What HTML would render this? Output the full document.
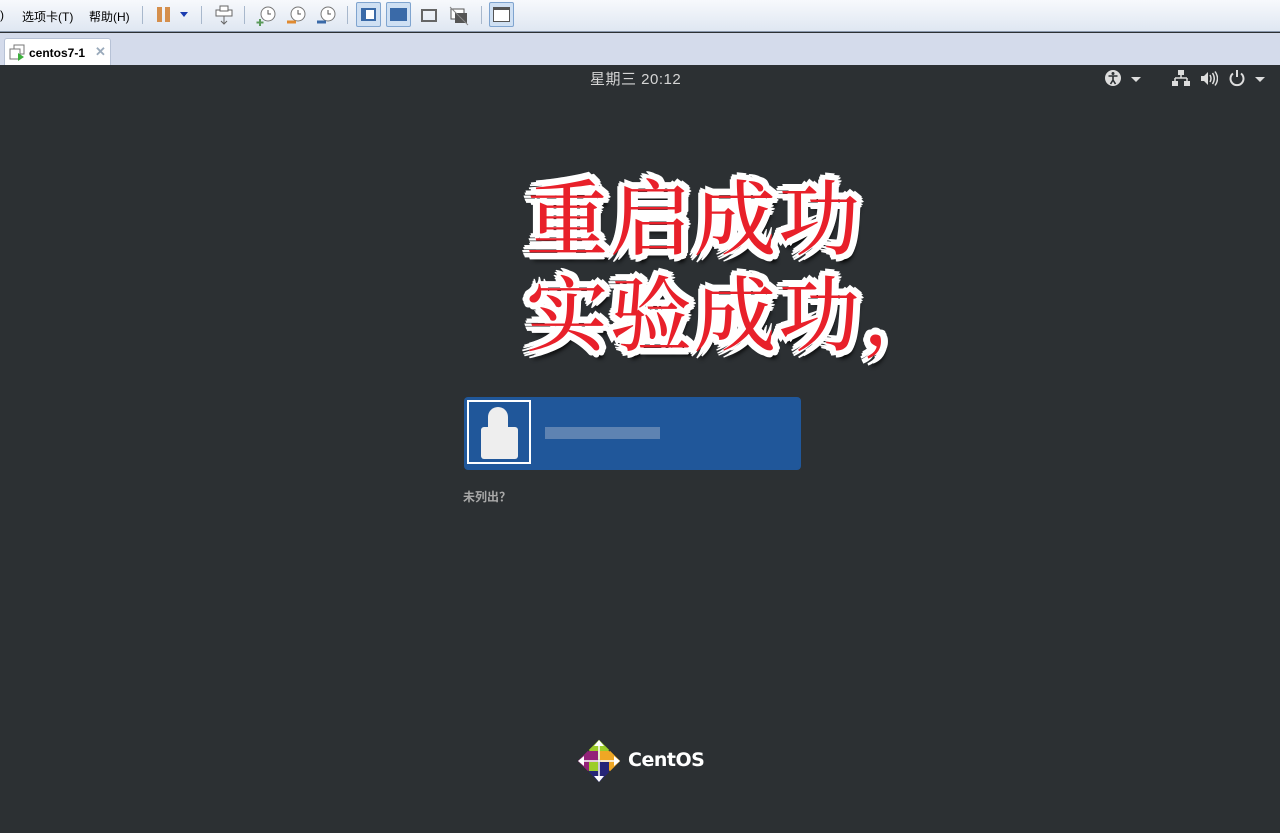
<!DOCTYPE html>
<html><head><meta charset="utf-8"><style>
*{margin:0;padding:0;box-sizing:border-box}
body{width:1280px;height:833px;overflow:hidden;background:#2c3033;font-family:"Liberation Sans","Noto Sans CJK SC",sans-serif;position:relative}
#tb{position:absolute;left:0;top:0;width:1280px;height:32px;background:linear-gradient(#f7f9fc,#dfe7f2);border-bottom:1px solid #8a98ad;font-size:12px;color:#000}
#tb span{position:absolute;top:8px}
.sep{position:absolute;top:6px;width:1px;height:18px;background:#a8b8cc}
.ic{position:absolute;top:5px;width:22px;height:22px}
#tabs{position:absolute;left:0;top:33px;width:1280px;height:32px;background:#d4dbeb}
#tab{position:absolute;left:4px;top:5px;width:107px;height:27px;background:#fff;border:1px solid #b7c2d6;border-bottom:none;border-radius:3px 3px 0 0;font-size:12px;font-weight:bold}
#scr{position:absolute;left:0;top:65px;width:1280px;height:768px;background:#2c3033}
.big{position:absolute;left:526px;font-family:"Noto Serif CJK SC","Noto Sans CJK SC",serif;font-weight:500;font-size:82px;color:#e8202a;line-height:1;letter-spacing:2px;
text-shadow:-5px -5px 0 #fff,5px -5px 0 #fff,-5px 5px 0 #fff,5px 5px 0 #fff,0 -7px 0 #fff,0 7px 0 #fff,-7px 0 0 #fff,7px 0 0 #fff,-6px 3px 0 #fff,6px 3px 0 #fff,-6px -3px 0 #fff,6px -3px 0 #fff,4px 8px 4px #000}
</style></head><body>
<div id="tb">
<span style="left:0">)</span><span style="left:22px">选项卡(T)</span><span style="left:89px">帮助(H)</span>
<div class="sep" style="left:142px"></div>
<div style="position:absolute;left:157px;top:7px;width:5px;height:15px;background:#d58f4c"></div>
<div style="position:absolute;left:165px;top:7px;width:5px;height:15px;background:#d58f4c"></div>
<div style="position:absolute;left:180px;top:12px;border:4px solid transparent;border-top:5px solid #1a3cb0"></div>
<div class="sep" style="left:201px"></div>
<svg class="ic" style="left:213px" viewBox="0 0 22 22"><rect x="3" y="5" width="16" height="6" fill="#fff" stroke="#666"/><rect x="7" y="1" width="8" height="5" fill="#fff" stroke="#666"/><path d="M11 11v8M8 16l3 3 3-3" stroke="#666" fill="none"/></svg>
<div class="sep" style="left:244px"></div>
<svg class="ic" style="left:255px" viewBox="0 0 22 22"><circle cx="13" cy="9" r="7" fill="#fff" stroke="#777"/><path d="M13 5v4h3" stroke="#555" fill="none"/><path d="M5 14v7M1.5 17.5h7" stroke="#5a9a5a" stroke-width="2"/></svg>
<svg class="ic" style="left:285px" viewBox="0 0 22 22"><circle cx="13" cy="9" r="7" fill="#fff" stroke="#777"/><path d="M13 5v4h3" stroke="#555" fill="none"/><path d="M2 17h9" stroke="#e08a30" stroke-width="3"/></svg>
<svg class="ic" style="left:315px" viewBox="0 0 22 22"><circle cx="13" cy="9" r="7" fill="#fff" stroke="#777"/><path d="M13 5v4h3" stroke="#555" fill="none"/><path d="M2 17h9" stroke="#3a6aa8" stroke-width="3"/></svg>
<div class="sep" style="left:347px"></div>
<div style="position:absolute;left:356px;top:2px;width:25px;height:25px;border:1px solid #7fa4cf;background:#cfe0f3;border-radius:2px"><div style="position:absolute;left:4px;top:5px;width:15px;height:13px;border:2px solid #3a6aa8;background:#fff;border-left-width:5px"></div></div>
<div style="position:absolute;left:386px;top:2px;width:25px;height:25px;border:1px solid #7fa4cf;background:#cfe0f3;border-radius:2px"><div style="position:absolute;left:3px;top:5px;width:17px;height:13px;border:2px solid #3a6aa8;background:#3a6aa8"></div></div>
<svg class="ic" style="left:418px" viewBox="0 0 22 22"><rect x="4" y="5" width="14" height="11" fill="none" stroke="#666" stroke-width="2"/></svg>
<svg class="ic" style="left:448px" viewBox="0 0 22 22"><rect x="3" y="4" width="13" height="10" fill="#fff" stroke="#555"/><rect x="7" y="8" width="12" height="10" fill="#555"/><path d="M2 2l18 18" stroke="#888"/></svg>
<div class="sep" style="left:481px"></div>
<div style="position:absolute;left:489px;top:2px;width:25px;height:25px;border:1px solid #7fa4cf;background:#cfe0f3;border-radius:2px"><div style="position:absolute;left:3px;top:4px;width:17px;height:15px;border:1px solid #555;border-top-width:3px;background:#fff"></div></div>
</div>
<div id="tabs"><div id="tab">
<svg style="position:absolute;left:4px;top:5px" width="18" height="18" viewBox="0 0 18 18"><rect x="5" y="1" width="10" height="9" fill="#fff" stroke="#777"/><rect x="1" y="5" width="10" height="10" fill="#fff" stroke="#777"/><path d="M9 9l6 4-6 4z" fill="#3cb03c"/></svg>
<span style="position:absolute;left:24px;top:7px">centos7-1</span>
<span style="position:absolute;left:90px;top:5px;color:#9aaabb;font-size:13px">✕</span>
</div></div>
<div id="scr">
<div style="position:absolute;left:590px;top:3px;color:#d5d5d5;font-size:15px;letter-spacing:.5px">星期三 20:12</div>
<svg style="position:absolute;left:1104px;top:4px" width="18" height="18" viewBox="0 0 18 18"><circle cx="9" cy="9" r="8" fill="#ddd"/><circle cx="9" cy="4.5" r="1.5" fill="#2c3033"/><path d="M4.5 7h9M9 7v4l-2.5 4M9 11l2.5 4" stroke="#2c3033" stroke-width="1.6" fill="none"/></svg>
<div style="position:absolute;left:1131px;top:12px;border:5px solid transparent;border-top:5px solid #ddd"></div>
<svg style="position:absolute;left:1172px;top:5px" width="18" height="17" viewBox="0 0 18 17"><rect x="6" y="0" width="6" height="5" fill="#ddd"/><path d="M9 5v3M3 8h12M3 8v3M15 8v3" stroke="#ddd" stroke-width="1.5" fill="none"/><rect x="0" y="11" width="6" height="5" fill="#ddd"/><rect x="12" y="11" width="6" height="5" fill="#ddd"/></svg>
<svg style="position:absolute;left:1200px;top:5px" width="18" height="17" viewBox="0 0 18 17"><path d="M1 6h3l4-4v13l-4-4H1z" fill="#ddd"/><path d="M10 5q2 3.5 0 7M12.5 3q3.5 5.5 0 11M15 1.5q5 7 0 14" stroke="#ddd" stroke-width="1.5" fill="none"/></svg>
<svg style="position:absolute;left:1228px;top:4px" width="18" height="18" viewBox="0 0 18 18"><path d="M5 4.5a6.5 6.5 0 1 0 8 0" stroke="#ddd" stroke-width="2" fill="none"/><path d="M9 1v7" stroke="#ddd" stroke-width="2"/></svg>
<div style="position:absolute;left:1255px;top:12px;border:5px solid transparent;border-top:5px solid #ddd"></div>

<div class="big" style="top:108px">重启成功</div>
<div class="big" style="top:204px">实验成功,</div>

<div style="position:absolute;left:464px;top:332px;width:337px;height:73px;background:#20579a;border-radius:4px"></div>
<div style="position:absolute;left:467px;top:335px;width:64px;height:64px;border:2px solid #fff;background:#20579a"></div>
<div style="position:absolute;left:481px;top:362px;width:37px;height:32px;background:#eee;border-radius:3px"></div>
<div style="position:absolute;left:488px;top:342px;width:20px;height:24px;background:#eee;border-radius:10px 10px 2px 2px"></div>
<div style="position:absolute;left:545px;top:362px;width:115px;height:12px;background:#6e8fb8;opacity:.8"></div>
<div style="position:absolute;left:463px;top:423px;color:#a8a8a8;font-size:12px;font-weight:bold">未列出？</div>

<svg style="position:absolute;left:577px;top:674px" width="44" height="44" viewBox="0 0 44 44">
<g transform="translate(22 22) rotate(45)">
<rect x="-15" y="-15" width="14.5" height="14.5" fill="#9ccd2a"/>
<rect x="0.5" y="-15" width="14.5" height="14.5" fill="#efa724"/>
<rect x="0.5" y="0.5" width="14.5" height="14.5" fill="#262577"/>
<rect x="-15" y="0.5" width="14.5" height="14.5" fill="#932279"/>
</g>
<g transform="translate(22 22)">
<rect x="-10" y="-10" width="9" height="9" fill="#932279"/>
<rect x="1" y="-10" width="9" height="9" fill="#efa724"/>
<rect x="1" y="1" width="9" height="9" fill="#262577"/>
<rect x="-10" y="1" width="9" height="9" fill="#9ccd2a"/>
</g>
<path d="M22 1l5 6h-10zM22 43l5-6h-10zM1 22l6 5v-10zM43 22l-6 5v-10z" fill="#fff"/>
<path d="M22 3v38M3 22h38" stroke="#fff" stroke-width="1.5"/>
</svg>
<div style="position:absolute;left:628px;top:684px;color:#fff;font-size:19px;font-weight:bold;font-family:'DejaVu Sans',sans-serif;letter-spacing:-.5px">CentOS</div>
</div>
</body></html>
